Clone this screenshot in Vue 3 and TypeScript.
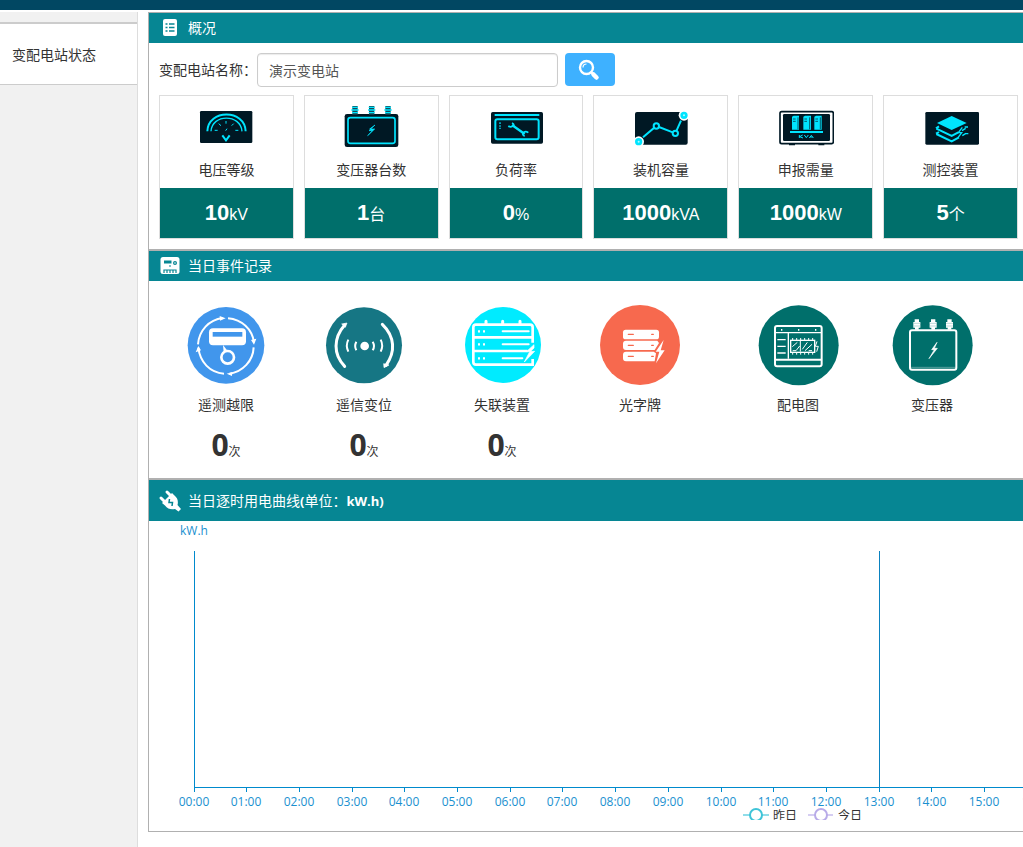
<script setup lang="ts">
import { ref } from 'vue'

interface Metric {
  id: string
  label: string
  value: string
  unit: string
  view: string
}

interface EventItem {
  id: string
  label: string
  count?: number
  view: string
}

const station = ref('演示变电站')

const metrics: Metric[] = [
  { id: 'voltage', label: '电压等级', value: '10', unit: 'kV', view: '145 42 168 132' },
  { id: 'transformer', label: '变压器台数', value: '1', unit: '台', view: '580 42 168 132' },
  { id: 'load', label: '负荷率', value: '0', unit: '%', view: '144 42 168 132' },
  { id: 'capacity', label: '装机容量', value: '1000', unit: 'kVA', view: '579 42 168 132' },
  { id: 'demand', label: '申报需量', value: '1000', unit: 'kW', view: '144 42 168 132' },
  { id: 'device', label: '测控装置', value: '5', unit: '个', view: '578 42 168 132' },
]

const events: EventItem[] = [
  { id: 'limit', label: '遥测越限', count: 0, view: '138 192 240 246' },
  { id: 'signal', label: '遥信变位', count: 0, view: '552 192 240 246' },
  { id: 'offline', label: '失联装置', count: 0, view: '126 42 240 246' },
  { id: 'board', label: '光字牌', view: '540 42 240 246' },
]

const shortcuts: EventItem[] = [
  { id: 'diagram', label: '配电图', view: '114 192 240 246' },
  { id: 'trans', label: '变压器', view: '516 192 240 246' },
]

const axisLeft = 45
const axisStep = 52.7
const ticks = Array.from({ length: 17 }, (_, hour) => ({
  x: Math.floor(axisLeft + hour * axisStep),
  text: String(hour).padStart(2, '0') + ':00',
}))
const pointerX = ticks[13].x
</script>

<template>
  <div class="page">
    <div class="topbar"></div>
    <div class="layout">
      <nav class="sidebar">
        <a class="side-item" href="#">变配电站状态</a>
      </nav>

      <main class="content">
        <section class="panel">
          <h2 class="panel-head">
            <svg class="head-icon" viewBox="0 0 22 22" aria-hidden="true">
              <rect x="4" y="2" width="14" height="17" rx="2" fill="#fff" />
              <path d="M6.500 7H8.500M10 7H15.500M6.500 10.500H8.500M10 10.500H15.500M6.500 14H8.500M10 14H15.500" stroke="#068693" stroke-width="1.600" />
            </svg>
            <span>概况</span>
          </h2>
          <div class="overview">
            <form class="search" @submit.prevent>
              <label for="station">变配电站名称：</label>
              <input id="station" v-model="station" type="text" />
              <button type="submit" aria-label="搜索">
                <svg width="24" height="24" viewBox="0 0 24 24" aria-hidden="true">
                  <circle cx="9.500" cy="9.500" r="6.500" fill="none" stroke="#fff" stroke-width="2.400" />
                  <path d="M6 9.500A3.500 3.500 0 0 1 9.500 6" fill="none" stroke="#fff" stroke-width="1.200" />
                  <path d="M14 14L16 16" stroke="#fff" stroke-width="2.400" />
                  <path d="M16.500 16.500L19.500 19.500" stroke="#fff" stroke-width="4.500" stroke-linecap="round" />
                </svg>
              </button>
            </form>

            <div class="cards">
              <article v-for="m in metrics" :key="m.id" class="card">
                <div class="card-top">
                  <svg class="card-icon" :viewBox="m.view" aria-hidden="true">
                    <g v-if="m.id === 'voltage'" fill="none" stroke="#00e5ff">
                      <rect x="151" y="63" width="157" height="96" rx="4" fill="#001824" stroke="none" />
                      <path d="M173 124C175 57 286 57 288 124" stroke-width="6" />
                      <path d="M184 124C187 71 273 71 277 124" stroke-width="4" />
                      <path d="M195 121H204M257 121H266M207 101L214 107M252 101L246 107M229 93V101M232 116L228 122" stroke-width="3" />
                      <path d="M218 136L229 151L240 136" stroke-width="6" />
                    </g>
                    <g v-else-if="m.id === 'transformer'" fill="none" stroke="#00e5ff">
                      <rect x="585" y="72" width="161" height="99" rx="7" fill="#001824" stroke="none" />
                      <path d="M616 48V74M666 48V74M715 48V74" stroke="#124b5a" stroke-width="16" />
                      <path d="M607 52H625M605 60H627M607 68H625M657 52H675M655 60H677M657 68H675M706 52H724M704 60H726M706 68H724" stroke-width="4" />
                      <rect x="595" y="83" width="141" height="77" rx="7" stroke-width="5" />
                      <path d="M676 105L660 117H675L654 137L668 122H658Z" fill="#00e5ff" stroke-width="2" />
                    </g>
                    <g v-else-if="m.id === 'load'" fill="none" stroke="#00e5ff">
                      <rect x="153" y="66" width="156" height="95" rx="5" fill="#001824" stroke="none" />
                      <path d="M164 75H298" stroke-width="6" />
                      <rect x="166" y="88" width="130" height="60" rx="6" stroke-width="6" />
                      <path d="M180 97V102M180 106V110M180 113V117" stroke-width="4" />
                      <path d="M216 105L254 132" stroke-width="7" />
                      <path d="M205 108Q213 114 221 107Q223 102 216 99M265 128Q256 121 249 129Q246 135 254 139" stroke-width="5" />
                    </g>
                    <g v-else-if="m.id === 'capacity'" fill="none" stroke="#00e5ff">
                      <rect x="585" y="66" width="158" height="98" rx="6" fill="#001824" stroke="none" />
                      <circle cx="732" cy="76" r="16" fill="#fff" stroke="none" />
                      <circle cx="596" cy="155" r="16" fill="#fff" stroke="none" />
                      <path d="M609 142L649 108L706 130L723 92" stroke-width="6" />
                      <g fill="#001824" stroke-width="6">
                        <circle cx="649" cy="108" r="8" />
                        <circle cx="706" cy="130" r="8" />
                      </g>
                      <g fill="#b4f8ff" stroke-width="8">
                        <circle cx="732" cy="76" r="7" />
                        <circle cx="596" cy="155" r="7" />
                      </g>
                    </g>
                    <g v-else-if="m.id === 'demand'">
                      <rect x="150" y="65" width="160" height="96" rx="5" fill="#fff" stroke="#001824" stroke-width="5" />
                      <path d="M177 163H195M265 163H283" stroke="#001824" stroke-width="5" />
                      <rect x="159" y="72" width="141" height="81" rx="4" fill="#001824" />
                      <path d="M186 80L191 77H207V119H186ZM220 80L225 77H243V119H220ZM253 80L258 77H275V119H253Z" fill="#00e5ff" />
                      <path d="M204 82V118M239 82V118M271 82V118M189 87H197M189 94H197M223 87H231M223 94H231M256 87H264M256 94H264" stroke="#001824" stroke-width="2" />
                      <path d="M180 126H279" stroke="#00e5ff" stroke-width="6" />
                      <path d="M208 135V144M218 135L209 140L219 144M223 135L229 143L235 135M238 144L244 136L250 144M241 141H247" fill="none" stroke="#00e5ff" stroke-width="3" />
                    </g>
                    <g v-else fill="none" stroke="#00e5ff">
                      <rect x="585" y="66" width="161" height="98" rx="4" fill="#001824" stroke="none" />
                      <path d="M620 99L664 78L709 99L664 120Z" fill="#00e5ff" stroke="none" />
                      <path d="M618 116L664 138L684 127M618 132L664 154L686 142M617 115L626 109M617 131L626 126" stroke-width="6" />
                      <path d="M696 112L684 128H694L683 143M695 122L706 115M696 137L707 130M703 111H713M704 131H714" stroke-width="4" />
                    </g>
                  </svg>
                  <h3>{{ m.label }}</h3>
                </div>
                <p class="card-value">
                  <strong>{{ m.value }}</strong><span>{{ m.unit }}</span>
                </p>
              </article>
            </div>
          </div>
        </section>

        <section class="panel">
          <h2 class="panel-head">
            <svg class="head-icon" viewBox="0 0 22 22" aria-hidden="true">
              <rect x="1.500" y="2" width="19" height="17" rx="2.500" fill="#fff" />
              <path d="M5 7H12.500" stroke="#068693" stroke-width="3" />
              <circle cx="16" cy="8" r="1.400" fill="#fff" stroke="#068693" stroke-width="1.200" />
              <path d="M10 11H12M5 18V15H17V18M8 15V18M11 15V18M14 15V18" fill="none" stroke="#068693" stroke-width="1.200" />
            </svg>
            <span>当日事件记录</span>
          </h2>
          <div class="events">
            <div class="event-group">
              <div v-for="e in events" :key="e.id" class="event">
                <svg class="event-icon" :viewBox="e.view" aria-hidden="true">
                  <g v-if="e.id === 'limit'" fill="none" stroke="#fff">
                    <circle cx="258" cy="316" r="115" fill="#4196ec" stroke="none" />
                    <path d="M174 313C177 272 207 239 248 234M264 235C306 239 336 267 342 307M341 322C339 363 309 395 267 402M252 401C209 398 180 366 175 323" stroke-width="6" />
                    <path d="M239 228L257 235L240 242ZM349 296L342 314L333 300ZM276 408L260 401L277 396ZM167 337L175 318L183 331Z" fill="#fff" stroke="none" />
                    <rect x="207" y="265" width="111" height="51" rx="12" fill="#fff" stroke="none" />
                    <path d="M218 283V276H307V290H218Z" fill="#4196ec" stroke="none" />
                    <circle cx="263" cy="352" r="19" stroke-width="8" />
                    <path d="M249 315L251 337L263 333Z" fill="#fff" stroke="none" />
                  </g>
                  <g v-else-if="e.id === 'signal'" fill="none" stroke="#fff">
                    <circle cx="672" cy="316" r="114" fill="#167684" stroke="none" />
                    <path d="M614 255C580 294 579 343 614 379M727 253C765 290 767 336 738 376" stroke-width="9" stroke-linecap="round" />
                    <path d="M605 252L621 249L616 262ZM731 371L747 375L732 383Z" fill="#fff" stroke-width="2" />
                    <path d="M625 299Q616 317 625 335M649 305Q642 318 649 331M698 305Q706 318 698 331M722 299Q731 317 722 335" stroke-width="6" />
                    <circle cx="674" cy="318" r="13" fill="#fff" stroke="none" />
                  </g>
                  <g v-else-if="e.id === 'offline'" fill="none" stroke="#fff">
                    <circle cx="249" cy="165" r="114" fill="#00ebff" stroke="none" />
                    <path d="M338 158V112Q338 104 330 104H168Q160 104 160 112V216Q160 224 168 224H338V207M160 142H337M160 183H323" stroke-width="8" />
                    <path d="M198 94V103M248 94V103M300 94V103" stroke-width="9" stroke-linecap="round" />
                    <path d="M248 124H326M248 163H326M248 205H307" stroke-width="6" stroke-linecap="round" />
                    <path d="M174 124H180M189 124H195M174 163H180M189 163H195M174 205H180M189 205H195" stroke-width="7" />
                    <path d="M342 164L319 185H329L313 216L344 184H332L342 174Z" fill="#fff" stroke-width="2" />
                  </g>
                  <g v-else fill="#fff">
                    <circle cx="660" cy="165" r="120" fill="#f7694e" />
                    <rect x="609" y="119" width="108" height="29" rx="8" />
                    <path d="M618 152H712L717 159L704 180H618Q609 180 609 171V161Q609 152 618 152ZM618 185H701L708 190L704 214H618Q609 214 609 205V194Q609 185 618 185Z" />
                    <path d="M625 133H640M625 166H640M625 199H640M695 133H700M695 166H700M695 199H700" stroke="#f7694e" stroke-width="4" stroke-linecap="round" />
                    <path d="M731 150L707 185H718L708 220L734 181H722Z" />
                  </g>
                </svg>
                <h3>{{ e.label }}</h3>
                <p v-if="e.count !== undefined" class="event-count">
                  <strong>{{ e.count }}</strong><span>次</span>
                </p>
              </div>
            </div>

            <div class="event-group shortcuts">
              <a v-for="s in shortcuts" :key="s.id" class="event" href="#">
                <svg class="event-icon" :viewBox="s.view" aria-hidden="true">
                  <g v-if="s.id === 'diagram'" fill="none" stroke="#fff">
                    <circle cx="236" cy="316" r="120" fill="#006f6b" stroke="none" />
                    <rect x="165" y="258" width="140" height="121" rx="6" stroke-width="6" />
                    <path d="M165 278H305M205 278V356M172 299H197M172 319H197M172 339H197" stroke-width="4" />
                    <path d="M165 359H305" stroke-width="6" />
                    <path d="M185 267V272M236 267V272M287 267V272" stroke-width="4" />
                    <rect x="212" y="301" width="72" height="36" stroke-width="4" />
                    <path d="M218 294V301M230 294V301M242 294V301M254 294V301M266 294V301M278 294V301M218 338V344M230 338V344M242 338V344M254 338V344M266 338V344M278 338V344" stroke-width="3" />
                    <path d="M217 320L232 307M218 332H228L239 318M241 303V335M247 328L262 307M255 332L276 313M266 332H276" stroke-width="3" />
                    <path d="M291 304L286 319H295L290 335" stroke-width="3" />
                  </g>
                  <g v-else fill="none" stroke="#fff">
                    <circle cx="638" cy="316" r="120" fill="#006f6b" stroke="none" />
                    <rect x="570" y="271" width="139" height="118" rx="6" stroke-width="6" />
                    <path d="M572 382H708" stroke-width="2" stroke-opacity="0.500" />
                    <path d="M584 238H597V246H601V263H596V269H585V263H580V246H584ZM633 238H646V246H650V263H645V269H634V263H629V246H633ZM682 238H695V246H699V263H694V269H683V263H678V246H682Z" fill="#fff" stroke="none" />
                    <path d="M580 250H601M580 258H601M629 250H650M629 258H650M678 250H699M678 258H699" stroke="#9cc9c7" stroke-width="2" />
                    <path d="M651 307L635 329H643L627 356L652 325H643Z" fill="#fff" stroke-width="2" />
                  </g>
                </svg>
                <h3>{{ s.label }}</h3>
              </a>
            </div>
          </div>
        </section>

        <section class="panel">
          <h2 class="panel-head tall">
            <svg class="head-icon" viewBox="0 0 22 22" aria-hidden="true">
              <path d="M8 2L12 6M2 8L6 12" stroke="#fff" stroke-width="3" stroke-linecap="round" />
              <path d="M13 3L15.500 5.500Q20 9 18.500 15L22 19L19.500 21.500L16 19Q10 20.500 6 15.500L3 13L5 11L11 5Z" fill="#fff" />
              <path d="M10.500 9L10 12.500H13.500L13 16" fill="none" stroke="#068693" stroke-width="1.500" />
            </svg>
            <span>当日逐时用电曲线<b>(</b>单位：<b>kW.h)</b></span>
          </h2>
          <div class="chart">
            <svg width="1306" height="299" viewBox="0 0 1306 299" role="img" aria-label="当日逐时用电曲线">
              <g class="axis-text">
                <text x="45" y="14">kW.h</text>
                <text v-for="t in ticks" :key="t.text" :x="t.x" y="285">{{ t.text }}</text>
              </g>
              <g class="axis-line">
                <path d="M45.500 30V271M45 266.500H1306" />
                <path v-for="t in ticks" :key="t.text" :d="`M${t.x + 0.5} 267V271`" />
              </g>
              <path class="pointer" :d="`M${pointerX + 0.5} 30V266`" />
              <g class="legend">
                <path d="M594 294H620" stroke="#8fdde9" stroke-width="2" />
                <circle cx="607" cy="294" r="6" stroke="#3fc4d8" stroke-width="2" />
                <text x="624" y="299">昨日</text>
                <path d="M659 294H684" stroke="#d5cdf2" stroke-width="2" />
                <circle cx="672" cy="294" r="6" stroke="#b8abe8" stroke-width="2" />
                <text x="689" y="299">今日</text>
              </g>
            </svg>
          </div>
        </section>
      </main>
    </div>
  </div>
</template>

<style>
body {
  margin: 0;
  background: #fff;
}
</style>

<style scoped>
* {
  box-sizing: border-box;
}
.page {
  min-height: 100vh;
  display: flex;
  flex-direction: column;
  overflow: hidden;
  color: #333;
  font: 14px/20px "Liberation Sans", "Noto Sans CJK SC", sans-serif;
}
.topbar {
  height: 10px;
  margin-bottom: 2px;
  background: #014762;
}
.layout {
  flex: 1;
  display: flex;
}
h2,
h3,
p {
  margin: 0;
  font-weight: 400;
}
.sidebar {
  width: 138px;
  flex: none;
  padding-top: 10px;
  background: #f1f1f1;
  border-right: 1px solid #ddd;
}
.side-item {
  display: block;
  padding: 21px 12px 19px;
  background: #fff;
  border-top: 2px solid #ccc;
  border-bottom: 1px solid #ccc;
  color: #333;
  font-size: 14px;
  text-decoration: none;
}
.content {
  flex: 1;
  min-width: 0;
  padding-left: 10px;
}
.panel {
  border: 1px solid #b0b0b0;
  border-right: 0;
}
.panel-head {
  display: flex;
  align-items: center;
  gap: 7px;
  height: 30px;
  padding-left: 10px;
  background: #068693;
  color: #fff;
  font-size: 14px;
}
.panel-head.tall {
  height: 41px;
}
.panel-head b {
  font-family: "Open Sans", sans-serif;
  font-size: 13px;
}
.head-icon {
  width: 22px;
  height: 22px;
  overflow: visible;
}
.overview {
  padding: 10px 5px 10px 10px;
}
.search {
  display: flex;
  margin-bottom: 8px;
}
.search label {
  width: 98px;
  line-height: 34px;
  white-space: nowrap;
}
.search input {
  width: 301px;
  height: 34px;
  margin-right: 7px;
  padding: 0 11px;
  border: 1px solid #ccc;
  border-radius: 4px;
  background: #fff;
  box-shadow: inset 0 1px 1px rgba(0, 0, 0, 0.08);
  color: #555;
  font: inherit;
}
.search button {
  display: flex;
  align-items: center;
  width: 50px;
  height: 33px;
  padding: 0 12px;
  border: 0;
  border-radius: 4px;
  background: #3eb1ff;
}
.cards {
  display: grid;
  grid-template-columns: repeat(6, 1fr);
  gap: 10px;
}
.card {
  border: 1px solid #ddd;
  text-align: center;
}
.card-top {
  height: 92px;
  padding-top: 8px;
}
.card-icon {
  display: block;
  width: 56px;
  height: 44px;
  margin: 0 auto 12px;
}
h3 {
  font-size: 14px;
  line-height: 20px;
}
.card-value {
  height: 50px;
  background: #006f6b;
  color: #fff;
  font-size: 16px;
  line-height: 50px;
}
.card-value strong {
  font-size: 22px;
}
.events {
  display: flex;
  gap: 22px;
  min-height: 197px;
  padding: 23px 24px 0 8px;
}
.event-group {
  flex: 552;
  display: flex;
}
.event-group.shortcuts {
  flex: 268;
}
.event {
  flex: 1;
  color: #333;
  text-align: center;
  text-decoration: none;
}
.event-icon {
  display: block;
  width: 80px;
  height: 82px;
  margin: 0 auto 9px;
  overflow: visible;
}
.event-count {
  margin-top: 10px;
  font-size: 12px;
  line-height: 40px;
}
.event-count strong {
  font: 700 30px/40px "Open Sans", sans-serif;
}
.chart {
  overflow: hidden;
  padding-bottom: 11px;
}
.chart svg {
  display: block;
}
.axis-text {
  fill: #1a90cf;
  font: 12px "Open Sans", sans-serif;
  text-anchor: middle;
}
.axis-line {
  fill: none;
  stroke: #008acd;
}
.pointer {
  stroke: #0a82c0;
}
.legend {
  fill: #fff;
}
.legend text {
  fill: #333;
  font-size: 12px;
}
</style>
